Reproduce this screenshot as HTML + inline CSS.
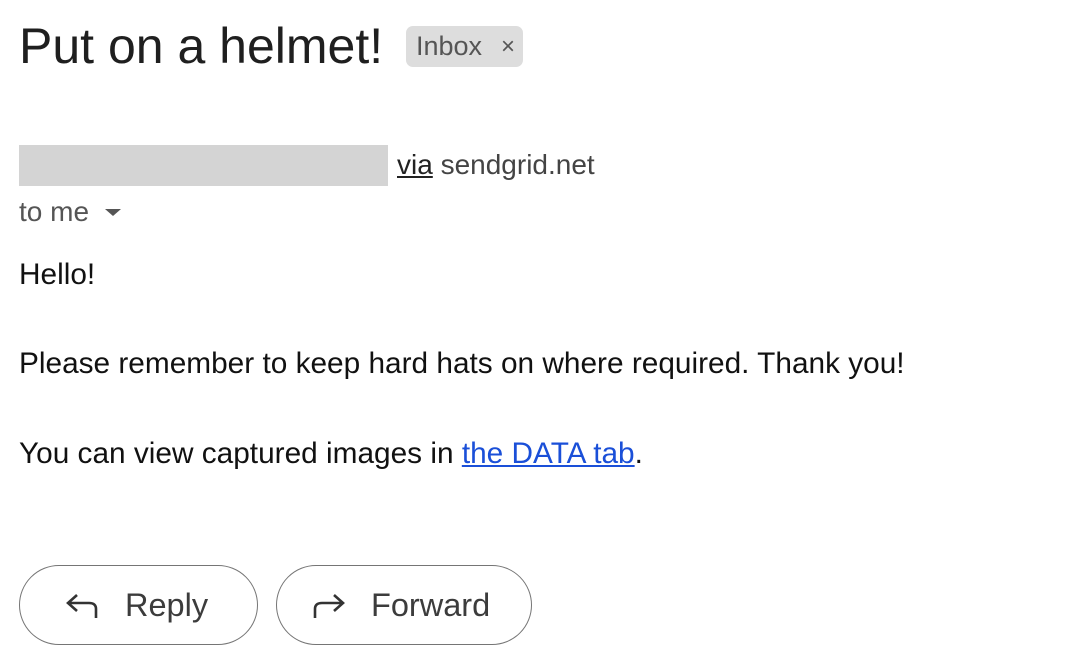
<!DOCTYPE html>
<html><head><style>
body{margin:0;width:1072px;height:664px;background:#fff;font-family:"Liberation Sans",sans-serif;position:relative;overflow:hidden}
.a{position:absolute;white-space:nowrap}
.btn{position:absolute;top:565px;height:80px;border:1.5px solid #757575;border-radius:41px;box-sizing:border-box;font-size:32.5px;color:#3c3c3c;}
.btn span{position:absolute;top:21px}
.btn svg{position:absolute;top:26px}
.b{font-size:29.8px;color:#111;line-height:34px}
</style></head><body>
<div class="a" style="left:19px;top:16px;font-size:50px;color:#1f1f1f;line-height:60px">Put on a helmet!</div>
<div class="a" style="left:406px;top:26px;width:117px;height:41px;background:#dddddd;border-radius:7px;font-size:27px;color:#555;line-height:41px;"><span style="position:absolute;left:10px">Inbox</span><span style="position:absolute;left:95px;font-size:24px">×</span></div>
<div class="a" style="left:19px;top:145px;width:369px;height:41px;background:#d4d4d4"></div>
<div class="a" style="left:397px;top:148px;font-size:28px;color:#444;line-height:34px"><span style="text-decoration:underline;color:#222">via</span> sendgrid.net</div>
<div class="a" style="left:19px;top:195px;font-size:28px;color:#555;line-height:34px">to me</div>
<div class="a" style="left:105px;top:209px;width:0;height:0;border-left:8px solid transparent;border-right:8px solid transparent;border-top:7px solid #555"></div>
<div class="a b" style="left:19px;top:258px">Hello!</div>
<div class="a b" style="left:19px;top:347px">Please remember to keep hard hats on where required. Thank you!</div>
<div class="a b" style="left:19px;top:437px">You can view captured images in <span style="color:#1a4fd8;text-decoration:underline">the DATA tab</span>.</div>
<div class="btn" style="left:19px;width:239px">
<svg style="left:45px" width="34" height="28" viewBox="0 0 34 28"><path d="M12 3 L3 11 L12 19 M3 11 H24 Q31 11 31 17 V26" fill="none" stroke="#333" stroke-width="2.6"/></svg>
<span style="left:105px">Reply</span></div>
<div class="btn" style="left:276px;width:256px">
<svg style="left:35px" width="34" height="28" viewBox="0 0 34 28"><path d="M22 3 L31 11 L22 19 M31 11 H10 Q3 11 3 17 V26" fill="none" stroke="#333" stroke-width="2.6"/></svg>
<span style="left:94px">Forward</span></div>
</body></html>
